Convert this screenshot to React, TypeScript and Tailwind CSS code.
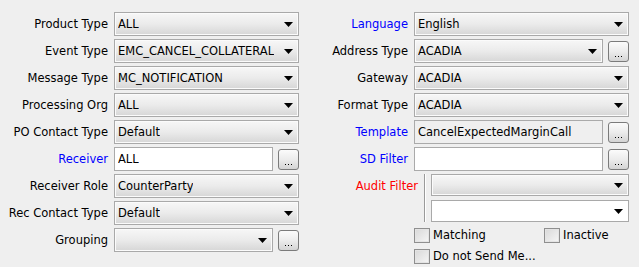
import type { ReactNode } from "react";

const font = { fontFamily: '"DejaVu Sans", Verdana, sans-serif' };

function Arrow() {
  return (
    <svg width="9" height="5" viewBox="0 0 9 5" className="ml-auto mr-[5px] shrink-0">
      <path d="M0 0 H9 L4.5 5 Z" fill="#000" />
    </svg>
  );
}

function Combo({ value = "", white = false, h = "h-[24px]" }: { value?: string; white?: boolean; h?: string }) {
  return (
    <div
      className={`flex ${h} min-w-0 flex-1 items-center border border-[#a9a9a9] pl-[3px] ${
        white ? "bg-white" : "bg-gradient-to-b from-[#f7f7f7] via-[#ebebeb] to-[#d6d6d6] shadow-[inset_0_0_0_1px_#fbfbfb]"
      }`}
    >
      <span className="truncate leading-[16px]">{value}</span>
      <Arrow />
    </div>
  );
}

function Field({ value = "", gray = false }: { value?: string; gray?: boolean }) {
  return (
    <div
      className={`flex h-[24px] min-w-0 flex-1 items-center border border-[#aaaaaa] pl-[3px] ${
        gray ? "bg-[#efefef]" : "bg-white"
      }`}
    >
      <span className="truncate leading-[16px]">{value}</span>
    </div>
  );
}

function Dots() {
  return (
    <div className="flex h-[21px] w-[21px] shrink-0 items-end justify-center rounded-[3px] border border-[#7b7b7b] bg-gradient-to-b from-[#fbfbfb] via-[#ececec] to-[#d4d4d4] pb-[4px]">
      <div className="flex gap-[2px]">
        <span className="h-[1px] w-[1px] bg-black" />
        <span className="h-[1px] w-[1px] bg-black" />
        <span className="h-[1px] w-[1px] bg-black" />
      </div>
    </div>
  );
}

function Row({ label, color = "text-black", labelW, children }: { label: string; color?: string; labelW: string; children: ReactNode }) {
  return (
    <div className="flex h-[24px] items-center">
      <div className={`${labelW} shrink-0 text-right leading-[16px] ${color}`}>{label}</div>
      <div className="ml-[6px] flex flex-1 items-center gap-[5px]">{children}</div>
    </div>
  );
}

function Check({ label }: { label: string }) {
  return (
    <div className="flex items-center gap-[3px]">
      <div className="h-[15px] w-[16px] border border-[#8f8f8f] bg-gradient-to-br from-[#d8d8d8] to-[#f6f6f6] shadow-[inset_0_0_0_1px_#e4e4e4]" />
      <span className="leading-[16px]">{label}</span>
    </div>
  );
}

export default function App() {
  const L = "w-[108px]";
  const R = "w-[88px]";
  return (
    <div className="flex h-[267px] w-[639px] bg-[#efefef] pt-[12px] text-[11.5px] leading-none text-black" style={font}>
      {/* Left column */}
      <div className="flex w-[299px] flex-col gap-[3px]">
        <Row label="Product Type" labelW={L}><Combo value="ALL" /></Row>
        <Row label="Event Type" labelW={L}><Combo value="EMC_CANCEL_COLLATERAL" /></Row>
        <Row label="Message Type" labelW={L}><Combo value="MC_NOTIFICATION" /></Row>
        <Row label="Processing Org" labelW={L}><Combo value="ALL" /></Row>
        <Row label="PO Contact Type" labelW={L}><Combo value="Default" /></Row>
        <Row label="Receiver" color="text-[#0000ff]" labelW={L}><Field value="ALL" /><Dots /></Row>
        <Row label="Receiver Role" labelW={L}><Combo value="CounterParty" /></Row>
        <Row label="Rec Contact Type" labelW={L}><Combo value="Default" /></Row>
        <Row label="Grouping" labelW={L}><Combo /><Dots /></Row>
      </div>

      {/* Right column */}
      <div className="ml-[21px] flex w-[309px] flex-col gap-[3px]">
        <Row label="Language" color="text-[#0000ff]" labelW={R}><Combo value="English" /></Row>
        <Row label="Address Type" labelW={R}><Combo value="ACADIA" /><Dots /></Row>
        <Row label="Gateway" labelW={R}><Combo value="ACADIA" /></Row>
        <Row label="Format Type" labelW={R}><Combo value="ACADIA" /></Row>
        <Row label="Template" color="text-[#0000ff]" labelW={R}><Field value="CancelExpectedMarginCall" gray /><Dots /></Row>
        <Row label="SD Filter" color="text-[#0000ff]" labelW={R}><Field /><Dots /></Row>

        <div className="flex h-[48px]">
          <div className="mt-[4px] w-[98px] shrink-0 text-right leading-[16px] text-[#ff0000]">Audit Filter</div>
          <div className="ml-[6px] w-[1px] bg-[#9a9a9a]" />
          <div className="w-[1px] bg-white" />
          <div className="ml-[5px] flex flex-1 flex-col gap-[4px] overflow-hidden">
            <Combo h="h-[22px] shrink-0" />
            <Combo white h="h-[24px] shrink-0" />
          </div>
        </div>

        <div className="mt-[2px] flex flex-col gap-[5px] pl-[94px]">
          <div className="flex">
            <div className="w-[130px]"><Check label="Matching" /></div>
            <Check label="Inactive" />
          </div>
          <Check label="Do not Send Me..." />
        </div>
      </div>
    </div>
  );
}
